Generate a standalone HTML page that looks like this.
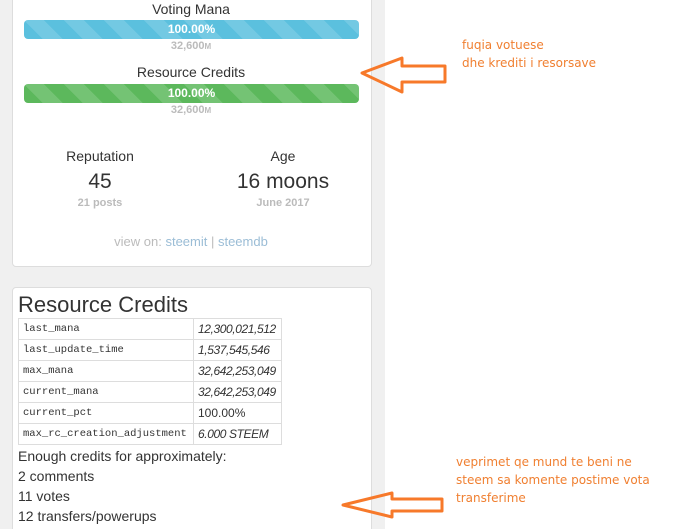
<!DOCTYPE html>
<html style="height:529px;overflow:hidden"><head><meta charset="utf-8"><style>
body{margin:0;width:684px;height:529px;overflow:hidden;background:#fff;font-family:"Liberation Sans",sans-serif;color:#333;position:relative}
.bg{position:absolute;left:0;top:0;width:385px;height:529px;background:#f0f0f0}
.card{position:absolute;left:12px;width:358px;background:#fff;border:1px solid #ddd;border-radius:4px}
.c{position:absolute;left:0;width:100%;text-align:center}
.bar{position:absolute;left:24px;width:335px;height:19px;border-radius:4px;color:#fff;font-weight:bold;font-size:12px;line-height:19px;text-align:center;
background-image:linear-gradient(45deg,rgba(255,255,255,.15) 25%,transparent 25%,transparent 50%,rgba(255,255,255,.15) 50%,rgba(255,255,255,.15) 75%,transparent 75%,transparent);background-size:40px 40px}
.sm{font-size:11px;color:#bbb;font-weight:bold}
table{position:absolute;left:18px;top:318px;border-collapse:collapse;font-size:12px;table-layout:fixed;width:264px}
td{border:1px solid #ddd;height:20px;padding:0 3px 0 4px;line-height:20px;white-space:nowrap;overflow:hidden}
td.k{font-family:"Liberation Mono",monospace;font-size:10.5px;width:167px}
td.v{font-style:italic;letter-spacing:-0.4px}
.ann{position:absolute;color:#f07f30;font-family:"DejaVu Sans","Liberation Sans",sans-serif;font-size:12px;line-height:18px}
.t{position:absolute;left:18px;font-size:14px}
</style></head><body>
<div class="bg"></div>
<div class="card" style="top:-10px;height:275px"></div>
<div class="card" style="top:287px;height:250px"></div>
<div class="c" style="left:12px;width:358px;top:1px;font-size:14px">Voting Mana</div>
<div class="bar" style="top:20px;background-color:#5bc0de">100.00%</div>
<div class="c sm" style="left:12px;width:358px;top:40px">32,600<span style="font-size:8px">M</span></div>
<div class="c" style="left:12px;width:358px;top:64px;font-size:14px">Resource Credits</div>
<div class="bar" style="top:84px;background-color:#5cb85c">100.00%</div>
<div class="c sm" style="left:12px;width:358px;top:104px">32,600<span style="font-size:8px">M</span></div>
<div class="c" style="left:0;width:200px;top:148px;font-size:14px">Reputation</div>
<div class="c" style="left:0;width:200px;top:170px;font-size:21px">45</div>
<div class="c sm" style="left:0;width:200px;top:197px">21 posts</div>
<div class="c" style="left:183px;width:200px;top:148px;font-size:14px">Age</div>
<div class="c" style="left:183px;width:200px;top:170px;font-size:21px">16 moons</div>
<div class="c sm" style="left:183px;width:200px;top:197px">June 2017</div>
<div class="c" style="left:12px;width:358px;top:234px;font-size:13px;color:#bbb">view on: <span style="color:#9bbdd6">steemit</span> | <span style="color:#9bbdd6">steemdb</span></div>
<div style="position:absolute;left:18px;top:292px;font-size:22px">Resource Credits</div>
<table>
<tr><td class="k">last_mana</td><td class="v">12,300,021,512</td></tr>
<tr><td class="k">last_update_time</td><td class="v">1,537,545,546</td></tr>
<tr><td class="k">max_mana</td><td class="v">32,642,253,049</td></tr>
<tr><td class="k">current_mana</td><td class="v">32,642,253,049</td></tr>
<tr><td class="k">current_pct</td><td>100.00%</td></tr>
<tr><td class="k">max_rc_creation_adjustment</td><td class="v">6.000 STEEM</td></tr>
</table>
<div class="t" style="top:448px">Enough credits for approximately:</div>
<div class="t" style="top:468px">2 comments</div>
<div class="t" style="top:488px">11 votes</div>
<div class="t" style="top:508px">12 transfers/powerups</div>
<div class="ann" style="left:462px;top:36px">fuqia votuese<br>dhe krediti i resorsave</div>
<div class="ann" style="left:456px;top:453px">veprimet qe mund te beni ne<br>steem sa komente postime vota<br>transferime</div>
<svg width="684" height="529" style="position:absolute;left:0;top:0">
<polygon points="362,73 402,58 402,66 445,66 445,82 402,82 402,92" fill="none" stroke="#f7792a" stroke-width="3" stroke-linejoin="round"/>
<polygon points="343,505 392,493 392,499 442,499 442,511 392,511 392,517" fill="none" stroke="#f7792a" stroke-width="3" stroke-linejoin="round"/>
</svg>
</body></html>
